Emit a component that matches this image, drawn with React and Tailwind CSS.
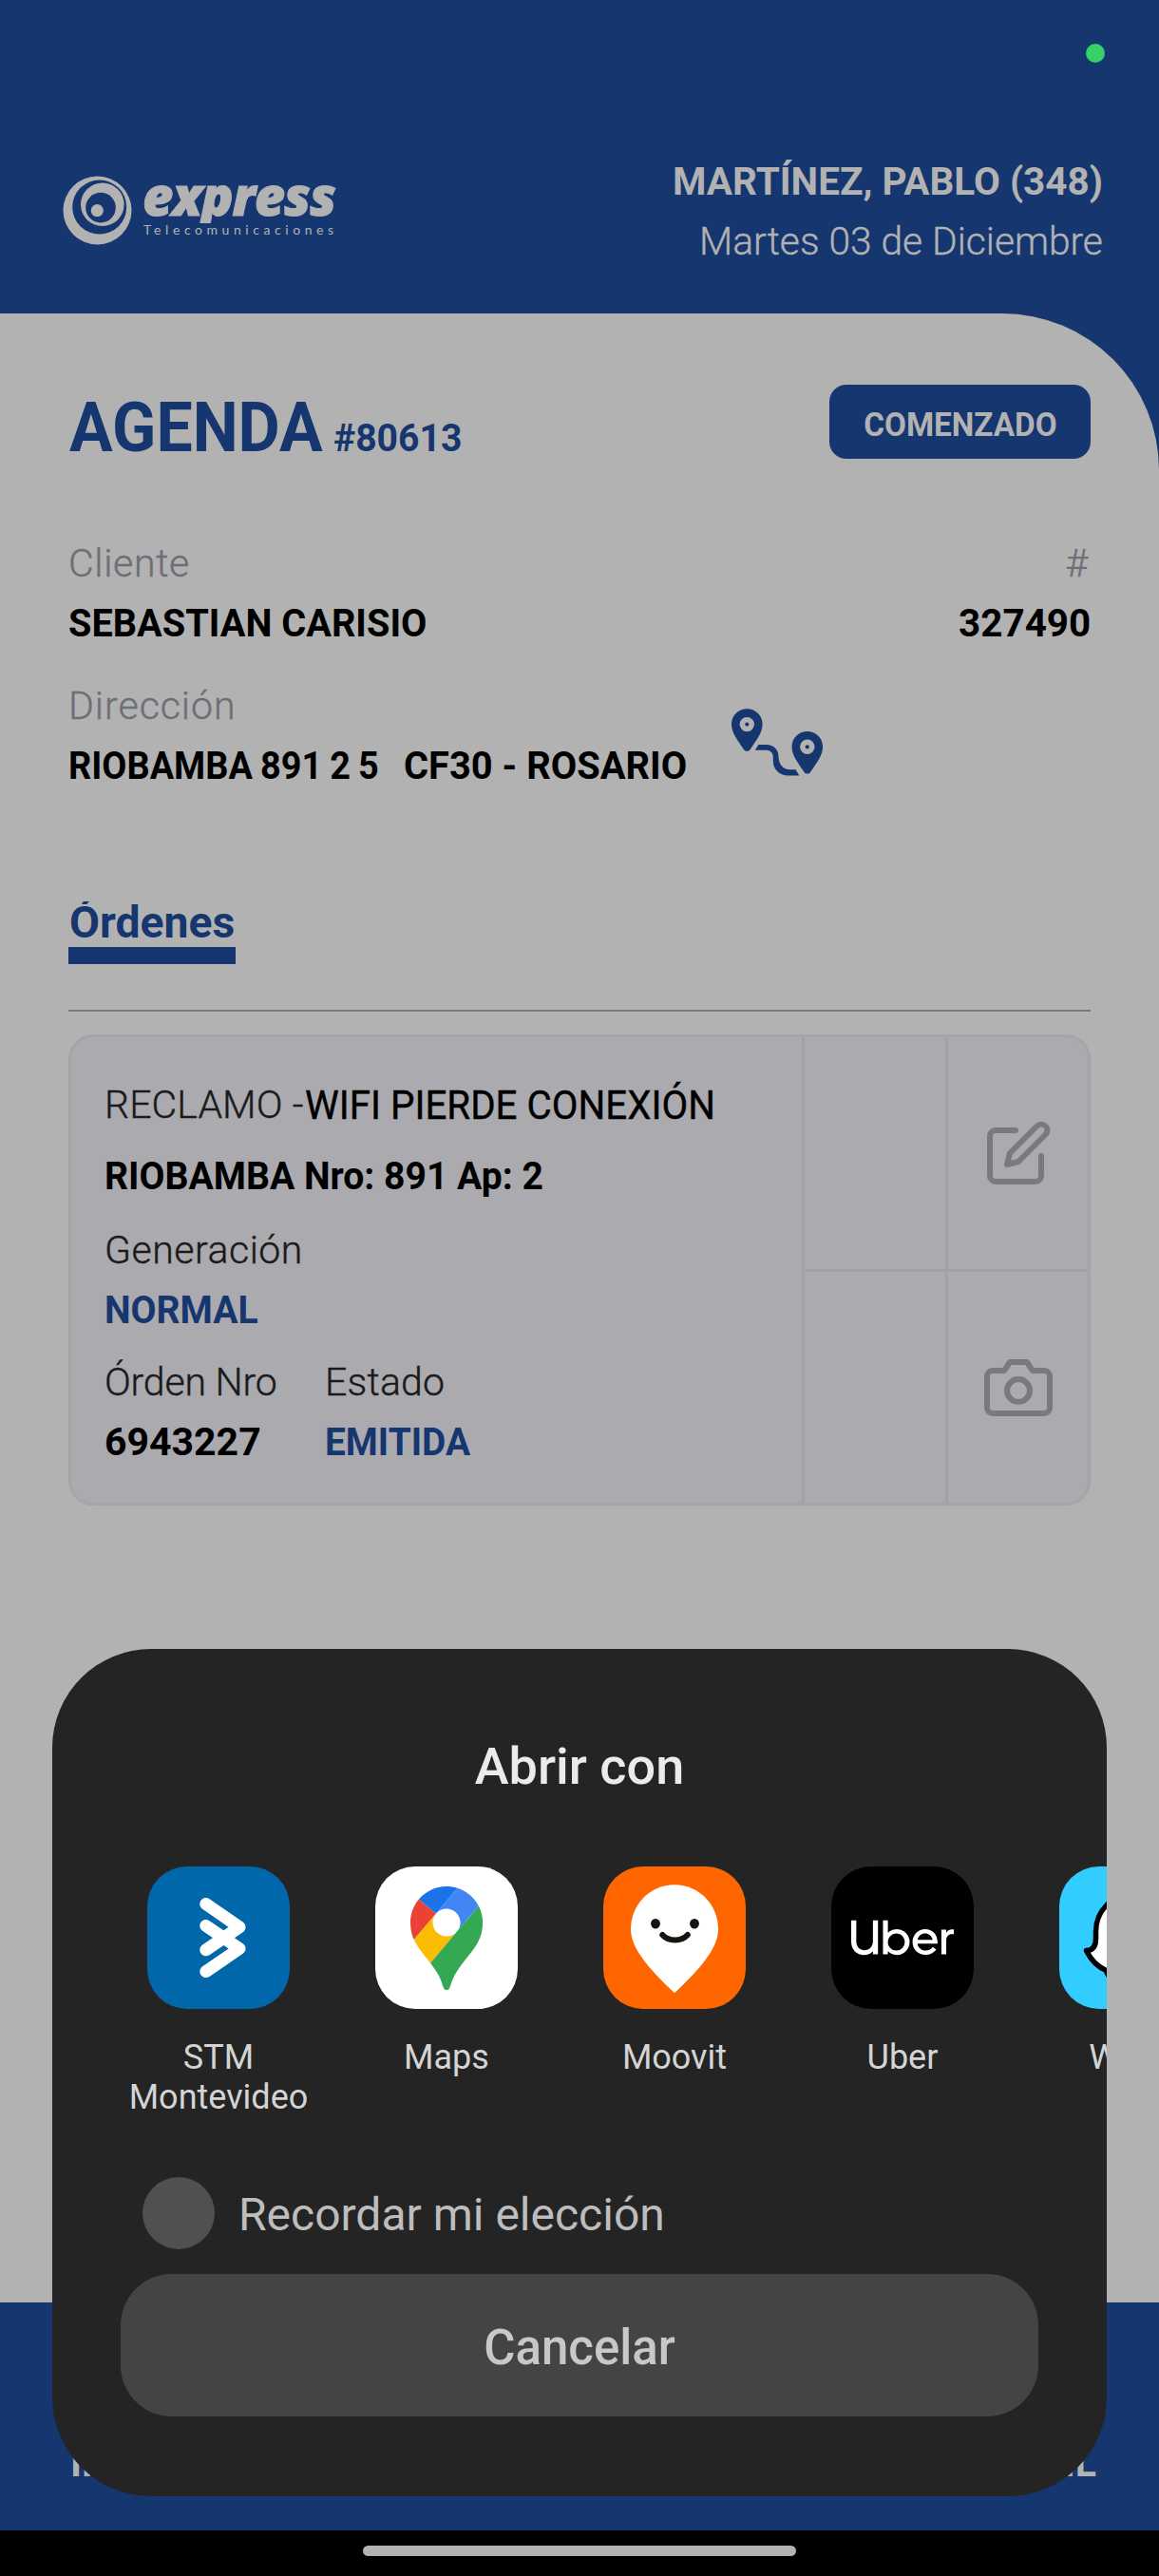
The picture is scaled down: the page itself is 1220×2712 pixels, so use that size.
import React from "react";
import { SiUber } from "react-icons/si";

const BOLD = "font-bold whitespace-pre";
const LIGHT = "font-light whitespace-pre [-webkit-text-stroke:0.4px_currentColor]";
const LINE = "text-[41px] leading-[63px]";

function SwirlLogo() {
  return (
    <svg width="73" height="73" viewBox="0 0 73 73" aria-hidden="true">
      <circle cx="36.5" cy="36.5" r="36" fill="#b2b2b2" />
      <circle cx="38.7" cy="33" r="28.5" fill="#16366f" />
      <circle cx="41.8" cy="30.3" r="22.8" fill="#b2b2b2" />
      <circle cx="40" cy="33.6" r="15.8" fill="#16366f" />
      <circle cx="36.3" cy="36.7" r="6.6" fill="#b2b2b2" />
    </svg>
  );
}

function RoutePin({ x, y }) {
  return (
    <g transform={`translate(${x} ${y})`}>
      <path
        d="M16.3 0C7.2 0 0 7.2 0 16.2c0 8.8 6.6 17 11.6 24.6l1.5 2.1c1.6 2.1 4.8 2.1 6.4 0l1.5-2.1C26 33.2 32.6 25 32.6 16.2 32.6 7.2 25.4 0 16.3 0Z"
        fill="#16366f"
      />
      <circle cx="16.3" cy="16.3" r="7.7" fill="#b2b2b2" />
      <circle cx="16.3" cy="16.3" r="2.1" fill="#16366f" />
    </g>
  );
}

function RouteIcon() {
  return (
    <svg width="98" height="78" viewBox="0 0 98 78" aria-hidden="true">
      <RoutePin x={1} y={1.3} />
      <RoutePin x={64.5} y={25} />
      <path
        d="M29.5 39H38c7 0 12.5 5 12.5 12.5S55 65.3 63 65.3h5.5l3.8 6.2H61C50.5 71.5 44.8 64 44.8 56.5V52c0-4.5-3-7.2-7.8-7.2H25.8Z"
        fill="#16366f"
      />
    </svg>
  );
}

function EditIcon() {
  return (
    <svg width="72" height="72" viewBox="0 0 24 24" fill="none" stroke="#797a7f" strokeWidth="2" strokeLinecap="round" strokeLinejoin="round">
      <path d="M11 4H4a2 2 0 0 0-2 2v14a2 2 0 0 0 2 2h14a2 2 0 0 0 2-2v-7" />
      <path d="M18.5 2.5a2.121 2.121 0 0 1 3 3L12 15l-4 1 1-4 9.5-9.5z" />
    </svg>
  );
}

function CameraIcon() {
  return (
    <svg width="72" height="72" viewBox="0 0 24 24" fill="none" stroke="#797a7f" strokeWidth="2" strokeLinecap="round" strokeLinejoin="round">
      <path d="M23 19a2 2 0 0 1-2 2H3a2 2 0 0 1-2-2V8a2 2 0 0 1 2-2h4l2-3h6l2 3h4a2 2 0 0 1 2 2z" />
      <circle cx="12" cy="13" r="4" />
    </svg>
  );
}

function StmGlyph() {
  return (
    <svg width="150" height="150" viewBox="0 0 150 150" fill="none" stroke="#fff" strokeWidth="13" strokeLinecap="round" strokeLinejoin="round">
      <path d="M61.8 39.5 97 63.9 61.8 87.8" />
      <path d="M61.8 110.6 97 86.5 61.8 62.5" />
    </svg>
  );
}

function MapsGlyph() {
  return (
    <svg width="76" height="109" viewBox="0 0 92.3 132.3">
      <path fill="#1a73e8" d="M60.2 2.2C55.8.8 51 0 46.1 0 32 0 19.3 6.4 10.8 16.5l21.8 18.3L60.2 2.2z" />
      <path fill="#ea4335" d="M10.8 16.5C4.1 24.5 0 34.9 0 46.1c0 8.7 1.7 15.7 4.6 22l28-33.3-21.8-18.3z" />
      <path fill="#4285f4" d="M46.2 28.5c9.8 0 17.7 7.9 17.7 17.7 0 4.3-1.6 8.3-4.2 11.4 0 0 13.9-16.6 27.5-32.7-5.6-10.8-15.3-19-27-22.7L32.6 34.8c3.3-3.8 8.1-6.3 13.6-6.3" />
      <path fill="#fbbc04" d="M46.2 63.8c-9.8 0-17.7-7.9-17.7-17.7 0-4.3 1.5-8.3 4.1-11.3l-28 33.3c4.8 10.6 12.8 19.2 21 29.9l34.1-40.5c-3.3 3.9-8.1 6.3-13.5 6.3" />
      <path fill="#34a853" d="M59.1 109.2c15.4-24.1 33.3-35 33.3-63 0-7.7-1.9-14.9-5.2-21.3L25.6 98c2.6 3.4 5.3 7.3 7.9 11.3 9.4 14.5 6.8 23.1 12.8 23.1s3.4-8.7 12.8-23.2" />
    </svg>
  );
}

function MoovitGlyph() {
  return (
    <svg width="150" height="150" viewBox="0 0 150 150">
      <path fill="#fff" d="M75 133.3C46 106 29 85 29 66c0-26 20.6-46.7 46-46.7S121 40 121 66c0 19-17 40-46 67.3Z" />
      <ellipse cx="55" cy="60.3" rx="4.9" ry="5.3" fill="#15140f" />
      <ellipse cx="96" cy="60.3" rx="4.9" ry="5.3" fill="#15140f" />
      <path d="M62.3 72c6.500 7.300 20 7.300 26.500 0" fill="none" stroke="#15140f" strokeWidth="6" strokeLinecap="round" />
    </svg>
  );
}

function WazeGlyph() {
  return (
    <svg width="150" height="150" viewBox="0 0 150 150">
      <circle cx="60" cy="109" r="13" fill="#000" />
      <path
        d="M80 29C56 29 38.5 46 38.5 69v7c0 8-3 12.5-10 12.5C33 98 42 108 56 112h30c22 0 38-18 38-41S104 29 80 29Z"
        fill="#fff"
        stroke="#000"
        strokeWidth="5.5"
        strokeLinejoin="round"
      />
    </svg>
  );
}

const apps = [
  { name: "STM Montevideo", tile: "bg-[#0068aa]", glyph: <StmGlyph /> },
  { name: "Maps", tile: "bg-white", glyph: <MapsGlyph /> },
  { name: "Moovit", tile: "bg-[#ff6600]", glyph: <MoovitGlyph /> },
  { name: "Uber", tile: "bg-black", glyph: <SiUber size={108} color="#fff" /> },
  { name: "Waze", tile: "bg-[#33ccff]", glyph: <WazeGlyph /> },
];

function Header() {
  return (
    <header className="flex h-[330px] items-start justify-between pt-[160px] pr-[59px] pl-[66px] text-[#b2b2b2]">
      <div className="mt-[25px] flex items-start">
        <SwirlLogo />
        <div className="ml-[9px]">
          <p className="h-[50px] w-[212px] overflow-hidden pl-[2px] font-['Open_Sans'] text-[56px] leading-[40px] font-extrabold tracking-[-1.2px] italic [-webkit-text-stroke:1px_#b2b2b2]">express</p>
          <p className="mt-[-1px] pl-[3px] font-['Lato'] text-[14px] leading-[16px] tracking-[4.56px]">Telecomunicaciones</p>
        </div>
      </div>
      <div className="text-right">
        <p className={`${BOLD} ${LINE} origin-right scale-x-[0.987]`}>MARTÍNEZ, PABLO (348)</p>
        <p className={`${LIGHT} ${LINE} origin-right scale-x-[0.992]`}>Martes 03 de Diciembre</p>
      </div>
    </header>
  );
}

function OrderCard() {
  return (
    <article className="mt-[24px] flex h-[496px] overflow-hidden rounded-[26px] border-[3px] border-[#a5a5a7] bg-[#abaaaf] text-black">
      <div className="w-[769px] pt-[40px] pl-[35px]">
        <p className={`${LINE} flex`}>
          <span className={`${LIGHT} w-[211px] tracking-[0.1px] text-[#1a1a1a]`}>RECLAMO -</span>
          <span className="origin-left scale-x-[0.96] text-[42px] whitespace-pre [-webkit-text-stroke:0.4px_#000]">WIFI PIERDE CONEXIÓN</span>
        </p>
        <p className={`${BOLD} ${LINE} mt-[12px] origin-left scale-x-[0.954]`}>RIOBAMBA Nro: 891 Ap: 2</p>
        <p className={`${LIGHT} ${LINE} mt-[15px] tracking-[0.5px] text-[#1a1a1a]`}>Generación</p>
        <p className={`${BOLD} ${LINE} origin-left scale-x-[0.954] text-[#16366f]`}>NORMAL</p>
        <div className="mt-[13px] flex">
          <div className="w-[232px]">
            <p className={`${LIGHT} ${LINE} tracking-[-0.2px] text-[#1a1a1a]`}>Órden Nro</p>
            <p className={`${BOLD} ${LINE}`}>6943227</p>
          </div>
          <div>
            <p className={`${LIGHT} ${LINE} tracking-[0.2px] text-[#1a1a1a]`}>Estado</p>
            <p className={`${BOLD} ${LINE} origin-left scale-x-[0.947] text-[#16366f]`}>EMITIDA</p>
          </div>
        </div>
      </div>
      <div className="w-[151px] border-l-[3px] border-[#a2a1a6]">
        <div className="h-[247px] border-b-[3px] border-[#a2a1a6]" />
      </div>
      <div className="w-[150px] border-l-[3px] border-[#a2a1a6]">
        <div className="flex h-[247px] items-center justify-center border-b-[3px] border-[#a2a1a6]">
          <EditIcon />
        </div>
        <div className="flex h-[243px] items-center justify-center">
          <CameraIcon />
        </div>
      </div>
    </article>
  );
}

function Agenda() {
  return (
    <main className="h-[2094px] rounded-tr-[165px] bg-[#b2b2b2] px-[72px] pt-[75px] text-black">
      <div className="flex h-[86px] items-start justify-between">
        <h1 className="mt-[6px] flex items-baseline pl-[1px] text-[#16366f]">
          <span className={`${BOLD} w-[278px] origin-left scale-x-[0.944] text-[72px] leading-[80px]`}>AGENDA</span>
          <span className={`${BOLD} origin-left scale-x-[0.978] text-[40px] leading-[40px]`}>#80613</span>
        </h1>
        <div className="flex h-[78px] w-[275px] items-center justify-center rounded-[18px] bg-[#16366f] pt-[7px]">
          <span className={`${BOLD} scale-x-[0.951] text-[35px] leading-[40px] text-[#b2b2b2]`}>COMENZADO</span>
        </div>
      </div>

      <div className="mt-[71px] flex justify-between">
        <div>
          <p className={`${LIGHT} ${LINE} tracking-[0.67px] text-[#6d6f77]`}>Cliente</p>
          <p className={`${BOLD} ${LINE} origin-left scale-x-[0.968]`}>SEBASTIAN CARISIO</p>
        </div>
        <div className="text-right">
          <p className={`${LIGHT} ${LINE} pr-[3px] text-[#6d6f77]`}>#</p>
          <p className={`${BOLD} ${LINE} origin-right scale-x-[0.985]`}>327490</p>
        </div>
      </div>

      <div className="mt-[24px] flex items-start">
        <div className="w-[649px]">
          <p className={`${LIGHT} ${LINE} tracking-[0.98px] text-[#6d6f77]`}>Dirección</p>
          <p className={`${BOLD} ${LINE} flex`}>
            <span className="w-[353px] origin-left scale-x-[0.924] [word-spacing:-1.5px]">RIOBAMBA 891 2 5</span>
            <span className="origin-left scale-x-[0.972]">CF30 - ROSARIO</span>
          </p>
        </div>
        <div className="mt-[33px] ml-[48px]">
          <RouteIcon />
        </div>
      </div>

      <div className="mt-[111px] h-[66px] w-[176px] overflow-y-clip border-b-[18px] border-[#16366f]">
        <h2 className={`${BOLD} origin-left scale-x-[0.985] pl-[1px] text-[47px] leading-[43px] text-[#16366f]`}>Órdenes</h2>
      </div>
      <hr className="mt-[48px] border-t-2 border-[#7a7a80]" />
      <OrderCard />
    </main>
  );
}

function OpenWithSheet() {
  return (
    <section className="absolute top-[1736px] left-[55px] flex h-[892px] w-[1110px] flex-col overflow-hidden rounded-[104px] bg-[#242424]">
      <h2 className="pt-[89px] text-center text-[54px] leading-[70px] font-medium text-[#ebebeb]">Abrir con</h2>
      <div className="mt-[70px] flex h-[264px] overflow-hidden pl-[55px]">
        {apps.map((app) => (
          <div key={app.name} className="flex w-[240px] shrink-0 flex-col items-center">
            <div className={`flex size-[150px] items-center justify-center overflow-hidden rounded-[42px] ${app.tile}`}>{app.glyph}</div>
            <p className="mt-[30px] w-[200px] text-center text-[36px] leading-[42px] text-[#d4d4d4]">{app.name}</p>
          </div>
        ))}
      </div>
      <label className="mt-[63px] flex h-[76px] items-center gap-[25px] pl-[95px]">
        <span className="size-[76px] rounded-full bg-[#505050]" />
        <span className="pt-[3px] text-[48px] leading-[60px] text-[#bdbdbd]">Recordar mi elección</span>
      </label>
      <button className="mx-[72px] mt-[26px] h-[150px] rounded-[54px] bg-[#444444] pt-[6px] text-[51px] font-medium text-[#c8c8c8]">Cancelar</button>
    </section>
  );
}

export default function App() {
  return (
    <div className="relative flex h-[2712px] w-[1220px] flex-col overflow-hidden bg-[#16366f] font-['Roboto',sans-serif]">
      <span className="absolute top-[46px] left-[1143px] size-[20px] rounded-full bg-[#36d167]" />
      <Header />
      <Agenda />
      <footer className="flex h-[240px] justify-between pt-[138px] pr-[66px] pl-[74px] text-[#b2b2b2]">
        <span className={`${BOLD} ${LINE}`}>INICIO</span>
        <span className={`${BOLD} ${LINE}`}>PERFIL</span>
      </footer>
      <div className="flex h-[48px] justify-center bg-black pt-[16px]">
        <span className="h-[11px] w-[456px] rounded-full bg-[#b2b2b2]" />
      </div>
      <OpenWithSheet />
    </div>
  );
}
